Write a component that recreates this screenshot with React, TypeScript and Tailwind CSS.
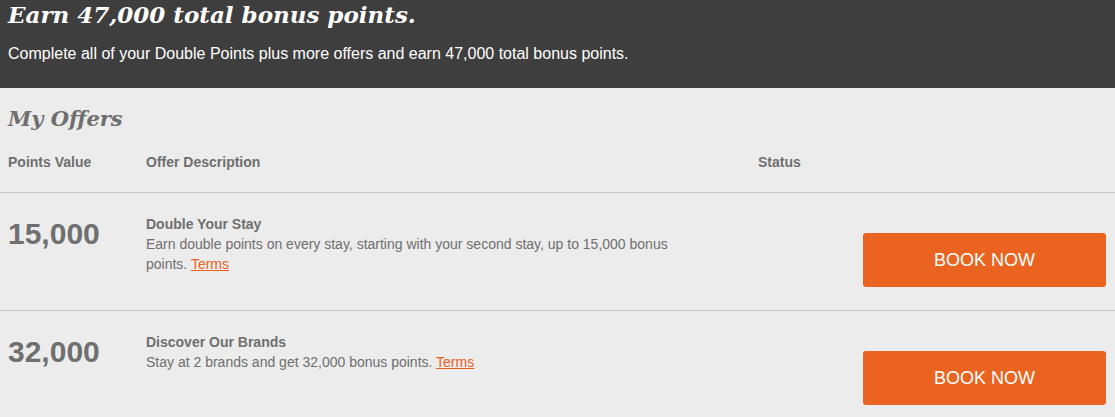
import React from "react";

const offers = [
  {
    points: "15,000",
    title: "Double Your Stay",
    desc: "Earn double points on every stay, starting with your second stay, up to 15,000 bonus points.",
  },
  {
    points: "32,000",
    title: "Discover Our Brands",
    desc: "Stay at 2 brands and get 32,000 bonus points.",
  },
];

export default function App() {
  return (
    <div className="w-[1115px] h-[417px] overflow-hidden bg-[#ececec] font-['Liberation_Sans',Arial,sans-serif]">
      <div className="h-[88px] bg-[#3e3e3e] px-2">
        <h1 className="font-['DejaVu_Serif',Georgia,serif] italic font-bold text-[23px] leading-[30px] text-white">
          Earn 47,000 total bonus points.
        </h1>
        <p className="mt-[14px] text-[16px] leading-[20px] text-white">
          Complete all of your Double Points plus more offers and earn 47,000 total bonus points.
        </p>
      </div>
      <div className="px-2 pt-[17px]">
        <h2 className="font-['DejaVu_Serif',Georgia,serif] italic font-bold text-[21px] leading-[28px] text-[#6f6f6f]">
          My Offers
        </h2>
      </div>
      <div className="grid grid-cols-[138px_612px_1fr] pl-2 pr-[9px] pt-[19px] pb-[20px] text-[14px] leading-[20px] font-bold text-[#6f6f6f]">
        <div>Points Value</div>
        <div>Offer Description</div>
        <div>Status</div>
      </div>
      {offers.map((o) => (
        <div
          key={o.points}
          className="grid grid-cols-[138px_612px_1fr] border-t border-[#c6c6c6] pl-2 pr-[9px] pt-[21px] pb-[23px]"
        >
          <div className="mt-[5px] text-[30px] leading-[30px] font-bold text-[#6f6f6f]">{o.points}</div>
          <div className="w-[560px] text-[14px] leading-[20px] text-[#6f6f6f]">
            <div className="font-bold">{o.title}</div>
            <div>
              {o.desc}{" "}
              <a href="#" className="text-[#e9601f] underline">
                Terms
              </a>
            </div>
          </div>
          <div className="flex justify-end pt-[19px]">
            <button className="w-[243px] h-[54px] rounded-[3px] bg-[#ea6320] text-white text-[18px]">
              BOOK NOW
            </button>
          </div>
        </div>
      ))}
    </div>
  );
}
